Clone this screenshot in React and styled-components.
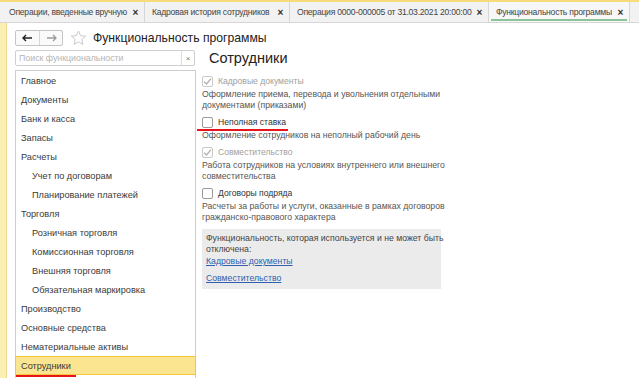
import React from "react";
import styled, { createGlobalStyle } from "styled-components";

const Global = createGlobalStyle`
  html, body { margin: 0; padding: 0; background: #fff; }
  body { font-family: "Liberation Sans", Arial, sans-serif; color: #333; overflow: hidden; }
  * { box-sizing: border-box; }
`;

const Page = styled.div`
  width: 639px;
  height: 378px;
  display: flex;
  flex-direction: column;
  overflow: hidden;
`;

const TabBar = styled.div`
  height: 23px;
  flex-shrink: 0;
  display: flex;
  align-items: stretch;
  background: #f2f2f2;
  border-top: 2px solid #f6dc7a;
  border-bottom: 1px solid #d6d6d6;
`;

const Tab = styled.div`
  flex-shrink: 0;
  white-space: nowrap;
  display: flex;
  align-items: center;
  justify-content: space-between;
  width: ${(p) => p.$w}px;
  padding: 0 6px 0 ${(p) => p.$pl || 7}px;
  font-size: 8.6px;
  letter-spacing: -0.25px;
  color: #444;
  border-right: 1px solid #d6d6d6;
  position: relative;
  background: ${(p) => (p.$active ? "#f7f7f7" : "transparent")};
  &::after {
    content: "";
    display: ${(p) => (p.$active ? "block" : "none")};
    position: absolute;
    left: 2px;
    right: 2px;
    bottom: 1px;
    height: 2px;
    background: #8cc39a;
  }
`;

const Close = styled.span`
  font-size: 10px;
  font-weight: bold;
  color: #333;
`;

const Main = styled.div`
  flex: 1;
  display: flex;
  min-height: 0;
`;

const Strip = styled.div`
  width: 7px;
  background: #fcefb4;
  border-right: 1px solid #eedb8e;
`;

const Content = styled.div`
  flex: 1;
  display: flex;
  flex-direction: column;
  padding-left: 8px;
  min-width: 0;
`;

const Header = styled.div`
  height: 27px;
  display: flex;
  align-items: center;
  padding-top: 3px;
`;

const NavGroup = styled.div`
  display: flex;
  border: 1px solid #c4c4c4;
  border-radius: 2px;
  height: 16px;
  background: #fafafa;
`;

const NavBtn = styled.div`
  width: 23px;
  display: flex;
  align-items: center;
  justify-content: center;
  & + & { border-left: 1px solid #d6d6d6; }
`;

const Title = styled.div`
  font-size: 12.2px;
  color: #222;
  margin-left: 6px;
`;

const Body = styled.div`
  flex: 1;
  display: flex;
  min-height: 0;
`;

const Sidebar = styled.div`
  width: 181px;
  display: flex;
  flex-direction: column;
`;

const Search = styled.div`
  height: 16px;
  margin-right: 1px;
  border: 1px solid #cfcfcf;
  border-radius: 2px;
  display: flex;
  align-items: center;
`;

const SearchText = styled.div`
  flex: 1;
  font-size: 8.8px;
  color: #b4b4b4;
  padding-left: 3px;
`;

const SearchClear = styled.div`
  width: 13px;
  height: 100%;
  border-left: 1px solid #dedede;
  font-size: 8px;
  color: #777;
  display: flex;
  align-items: center;
  justify-content: center;
`;

const List = styled.div`
  margin-top: 4px;
  border: 1px solid #cdcdcd;
  border-bottom: none;
  flex: 1;
  display: flex;
  flex-direction: column;
`;

const Item = styled.div`
  height: 19px;
  flex-shrink: 0;
  display: flex;
  align-items: center;
  font-size: 9.2px;
  color: #3a3a3a;
  white-space: nowrap;
  position: relative;
  background: ${(p) => (p.$selected ? "#fbe590" : "transparent")};
  border: 1px solid ${(p) => (p.$selected ? "#f3c63e" : "transparent")};
  margin: 0 -1px;
  padding-left: ${(p) => (p.$sub ? 16 : 5)}px;
`;

const RedLine = styled.span`
  position: absolute;
  left: ${(p) => p.$left}px;
  width: ${(p) => p.$width}px;
  bottom: ${(p) => p.$bottom}px;
  height: 2px;
  background: #e8141c;
`;

const Panel = styled.div`
  flex: 1;
  padding-left: 6px;
  display: flex;
  flex-direction: column;
`;

const Heading = styled.div`
  height: 16px;
  font-size: 14.5px;
  color: #222;
  padding-left: 7px;
  display: flex;
  align-items: center;
  margin-bottom: 8px;
`;

const CheckRow = styled.div`
  height: 14px;
  display: flex;
  align-items: center;
  gap: 5px;
  font-size: 8.6px;
  white-space: nowrap;
  color: ${(p) => (p.$disabled ? "#a0a0a0" : "#333")};
  position: relative;
  margin-top: ${(p) => (p.$first ? 0 : 4)}px;
`;

const Box = styled.span`
  width: 11px;
  height: 11px;
  border: 1px solid ${(p) => (p.$disabled ? "#c8c8c8" : "#9a9a9a")};
  border-radius: 2px;
  background: #fff;
  display: flex;
  align-items: center;
  justify-content: center;
`;

const Desc = styled.div`
  margin-top: 1px;
  font-size: 8.7px;
  line-height: 11px;
  color: #555;
  white-space: nowrap;
`;

const InfoBox = styled.div`
  margin-top: 6px;
  width: 239px;
  background: #ebebeb;
  padding: 4px 3px 5px 4px;
  font-size: 8.7px;
  line-height: 11px;
  color: #444;
  white-space: nowrap;
  display: flex;
  flex-direction: column;
`;

const Link = styled.a`
  color: #2f5fae;
  text-decoration: underline;
  margin-top: ${(p) => p.$mt}px;
  cursor: pointer;
`;

const Check = ({ color }) => (
  <svg width="9" height="9" viewBox="0 0 9 9">
    <path d="M1 4.6 L3.5 7 L8 1.6" fill="none" stroke={color} strokeWidth="1.3" />
  </svg>
);

const items = [
  ["Главное"],
  ["Документы"],
  ["Банк и касса"],
  ["Запасы"],
  ["Расчеты"],
  ["Учет по договорам", true],
  ["Планирование платежей", true],
  ["Торговля"],
  ["Розничная торговля", true],
  ["Комиссионная торговля", true],
  ["Внешняя торговля", true],
  ["Обязательная маркировка", true],
  ["Производство"],
  ["Основные средства"],
  ["Нематериальные активы"],
  ["Сотрудники", false, true],
];

export default function App() {
  return (
    <Page>
      <Global />
      <TabBar>
        <Tab $w={145} $pl={9}>Операции, введенные вручную<Close>×</Close></Tab>
        <Tab $w={145}>Кадровая история сотрудников<Close>×</Close></Tab>
        <Tab $w={199}>Операция 0000-000005 от 31.03.2021 20:00:00<Close>×</Close></Tab>
        <Tab $w={141} $active>Функциональность программы<Close>×</Close></Tab>
      </TabBar>
      <Main>
        <Strip />
        <Content>
          <Header>
            <NavGroup>
              <NavBtn>
                <svg width="11" height="8" viewBox="0 0 11 8">
                  <path d="M1 4 H10 M4 1 L1 4 L4 7" fill="none" stroke="#222" strokeWidth="1.4" />
                </svg>
              </NavBtn>
              <NavBtn>
                <svg width="11" height="8" viewBox="0 0 11 8">
                  <path d="M1 4 H10 M7 1 L10 4 L7 7" fill="none" stroke="#9a9a9a" strokeWidth="1.3" />
                </svg>
              </NavBtn>
            </NavGroup>
            <svg width="17" height="16" viewBox="0 0 17 16" style={{ marginLeft: 7 }}>
              <path
                d="M8.5 1 L10.6 5.6 L15.6 6.1 L11.8 9.4 L12.9 14.4 L8.5 11.8 L4.1 14.4 L5.2 9.4 L1.4 6.1 L6.4 5.6 Z"
                fill="none"
                stroke="#c4c4c4"
                strokeWidth="0.9"
              />
            </svg>
            <Title>Функциональность программы</Title>
          </Header>
          <Body>
            <Sidebar>
              <Search>
                <SearchText>Поиск функциональности</SearchText>
                <SearchClear>×</SearchClear>
              </Search>
              <List>
                {items.map(([t, sub, sel]) => (
                  <Item key={t} $sub={sub} $selected={sel}>
                    {t}
                    {sel && <RedLine $left={0} $width={60} $bottom={-3} />}
                  </Item>
                ))}
              </List>
            </Sidebar>
            <Panel>
              <Heading>Сотрудники</Heading>
              <CheckRow $first $disabled>
                <Box $disabled><Check color="#b0b0b0" /></Box>
                Кадровые документы
              </CheckRow>
              <Desc>Оформление приема, перевода и увольнения отдельными<br />документами (приказами)</Desc>
              <CheckRow>
                <Box />
                Неполная ставка
                <RedLine $left={-5} $width={91} $bottom={-2} />
              </CheckRow>
              <Desc>Оформление сотрудников на неполный рабочий день</Desc>
              <CheckRow $disabled>
                <Box $disabled><Check color="#b0b0b0" /></Box>
                Совместительство
              </CheckRow>
              <Desc>Работа сотрудников на условиях внутреннего или внешнего<br />совместительства</Desc>
              <CheckRow>
                <Box />
                Договоры подряда
              </CheckRow>
              <Desc>Расчеты за работы и услуги, оказанные в рамках договоров<br />гражданско-правового характера</Desc>
              <InfoBox>
                <span>Функциональность, которая используется и не может быть<br />отключена:</span>
                <Link $mt={1}>Кадровые документы</Link>
                <Link $mt={6}>Совместительство</Link>
              </InfoBox>
            </Panel>
          </Body>
        </Content>
      </Main>
    </Page>
  );
}
